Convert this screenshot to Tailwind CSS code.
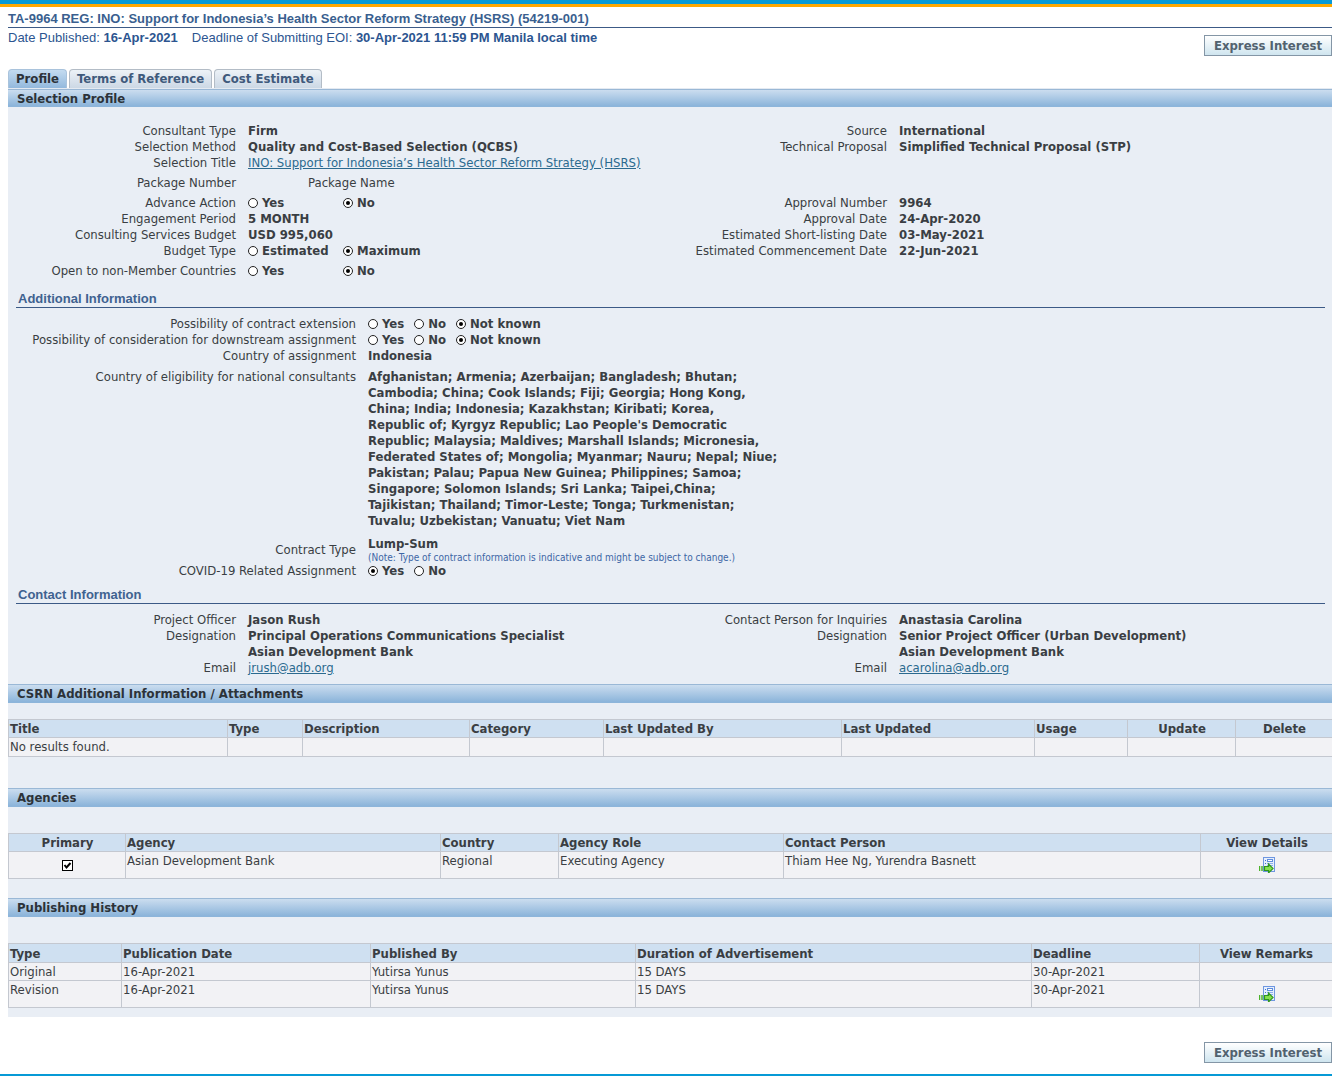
<!DOCTYPE html>
<html lang="en">
<head>
<meta charset="utf-8">
<meta name="viewport" content="width=device-width, initial-scale=1">
<title>TA-9964 REG: Selection Profile</title>
<script src="https://cdn.jsdelivr.net/npm/@tailwindcss/browser@4"></script>
</head>
<body class="bg-white font-['DejaVu_Sans_Condensed','DejaVu_Sans',sans-serif] text-[13px] leading-4 text-[#3a3e43]">

<svg class="hidden" aria-hidden="true">
  <symbol id="details" viewBox="0 0 16 16">
    <rect x="4.5" y=".5" width="11" height="14" fill="#e6effd" stroke="#6f97e0"/>
    <path d="M6 3.5h1M6 6.500h1" stroke="#3f72d0"/>
    <rect x="8.500" y="2.500" width="5" height="2" fill="#fff" stroke="#5f8ddd"/>
    <path d="M8 6.500h6M8 8.500h6" stroke="#8fb0ea"/>
    <path d="M.5 9v5M3 9v5" stroke="#4db32c" stroke-width="1.500"/>
    <path d="M5.500 9.500h4v-2.500l4.500 4.500-4.500 4.500v-2.500h-4z" fill="#86e04e" stroke="#2f961b" stroke-width="1.200"/>
  </symbol>
</svg>

<header>
  <div class="h-[7px] border-b-[3px] border-[#ffa800] bg-[#079ad6]"></div>
  <div class="ml-2 font-['Liberation_Sans',Arial,sans-serif] text-[#3a5f8f]">
    <h1 class="border-b border-[#3c5a86] pt-1 text-[13px] font-bold">TA-9964 REG: INO: Support for Indonesia’s Health Sector Reform Strategy (HSRS) (54219-001)</h1>
  </div>
  <div class="ml-2 flex items-start justify-between">
    <p class="flex gap-[14px] pt-[2px] font-['Liberation_Sans',Arial,sans-serif] text-[13px] text-[#2c5590]">
      <span>Date Published: <b>16-Apr-2021</b></span>
      <span>Deadline of Submitting EOI: <b>30-Apr-2021 11:59 PM Manila local time</b></span>
    </p>
    <button type="button" class="mt-[7px] h-[21px] w-32 border border-[#8496a6] bg-linear-to-b from-white to-[#cfe5ef] text-center font-bold text-[#52626f]">Express Interest</button>
  </div>
</header>

<main class="ml-2">
  <nav class="mt-[13px] flex gap-[2px]">
    <button type="button" class="h-[19px] rounded-t border border-b-0 border-[#a9c3dc] bg-linear-to-b from-[#c3dbf0] to-[#93b9dd] px-[7px] font-bold text-[#2c3238]">Profile</button>
    <button type="button" class="h-[19px] rounded-t border border-b-0 border-[#b3bcc6] bg-linear-to-b from-[#edf2f7] to-[#ccd8e5] px-[7px] font-bold text-[#3f5a7c]">Terms of Reference</button>
    <button type="button" class="h-[19px] rounded-t border border-b-0 border-[#b3bcc6] bg-linear-to-b from-[#edf2f7] to-[#ccd8e5] px-[7px] font-bold text-[#3f5a7c]">Cost Estimate</button>
  </nav>

  <div class="border-t border-[#e4eaf2] bg-[#e9eef5] pb-[9px]">
    <h2 class="h-[18px] border-y border-t-[#9ab8d6] border-b-[#8db5da] bg-linear-to-b from-[#cbddef] to-[#8bb4da] px-[9px] pt-px text-[13px] font-bold text-[#2c3238]">Selection Profile</h2>

    <section class="grid grid-cols-2 pt-4">
      <div>
        <div class="grid grid-cols-[228px_1fr] gap-x-3"><span class="text-right">Consultant Type</span><b>Firm</b></div>
        <div class="grid grid-cols-[228px_1fr] gap-x-3"><span class="text-right">Selection Method</span><b>Quality and Cost-Based Selection (QCBS)</b></div>
        <div class="grid grid-cols-[228px_1fr] gap-x-3"><span class="text-right">Selection Title</span><span><a href="#" class="text-[#2b6a8f] underline">INO: Support for Indonesia’s Health Sector Reform Strategy (HSRS)</a></span></div>
        <div class="mt-1 grid grid-cols-[228px_1fr] gap-x-3"><span class="text-right">Package Number</span><span class="pl-15">Package Name</span></div>
        <div class="mt-1 grid grid-cols-[228px_1fr] gap-x-3" role="radiogroup" aria-labelledby="adv">
          <span id="adv" class="text-right">Advance Action</span>
          <span class="grid grid-cols-[95px_1fr] font-bold">
            <label class="flex items-center gap-1"><input type="radio" name="adv" class="grid size-[10px] appearance-none place-content-center rounded-full border border-[#222] bg-white before:size-1 before:rounded-full checked:before:bg-black">Yes</label>
            <label class="flex items-center gap-1"><input type="radio" name="adv" checked class="grid size-[10px] appearance-none place-content-center rounded-full border border-[#222] bg-white before:size-1 before:rounded-full checked:before:bg-black">No</label>
          </span>
        </div>
        <div class="grid grid-cols-[228px_1fr] gap-x-3"><span class="text-right">Engagement Period</span><b>5 MONTH</b></div>
        <div class="grid grid-cols-[228px_1fr] gap-x-3"><span class="text-right">Consulting Services Budget</span><b>USD 995,060</b></div>
        <div class="grid grid-cols-[228px_1fr] gap-x-3" role="radiogroup" aria-labelledby="bud">
          <span id="bud" class="text-right">Budget Type</span>
          <span class="grid grid-cols-[95px_1fr] font-bold">
            <label class="flex items-center gap-1"><input type="radio" name="bud" class="grid size-[10px] appearance-none place-content-center rounded-full border border-[#222] bg-white before:size-1 before:rounded-full checked:before:bg-black">Estimated</label>
            <label class="flex items-center gap-1"><input type="radio" name="bud" checked class="grid size-[10px] appearance-none place-content-center rounded-full border border-[#222] bg-white before:size-1 before:rounded-full checked:before:bg-black">Maximum</label>
          </span>
        </div>
        <div class="mt-1 grid grid-cols-[228px_1fr] gap-x-3" role="radiogroup" aria-labelledby="open">
          <span id="open" class="text-right">Open to non-Member Countries</span>
          <span class="grid grid-cols-[95px_1fr] font-bold">
            <label class="flex items-center gap-1"><input type="radio" name="open" class="grid size-[10px] appearance-none place-content-center rounded-full border border-[#222] bg-white before:size-1 before:rounded-full checked:before:bg-black">Yes</label>
            <label class="flex items-center gap-1"><input type="radio" name="open" checked class="grid size-[10px] appearance-none place-content-center rounded-full border border-[#222] bg-white before:size-1 before:rounded-full checked:before:bg-black">No</label>
          </span>
        </div>
      </div>
      <div>
        <div class="grid grid-cols-[217px_1fr] gap-x-3"><span class="text-right">Source</span><b>International</b></div>
        <div class="grid grid-cols-[217px_1fr] gap-x-3"><span class="text-right">Technical Proposal</span><b>Simplified Technical Proposal (STP)</b></div>
        <div class="mt-10 grid grid-cols-[217px_1fr] gap-x-3"><span class="text-right">Approval Number</span><b>9964</b></div>
        <div class="grid grid-cols-[217px_1fr] gap-x-3"><span class="text-right">Approval Date</span><b>24-Apr-2020</b></div>
        <div class="grid grid-cols-[217px_1fr] gap-x-3"><span class="text-right">Estimated Short-listing Date</span><b>03-May-2021</b></div>
        <div class="grid grid-cols-[217px_1fr] gap-x-3"><span class="text-right">Estimated Commencement Date</span><b>22-Jun-2021</b></div>
      </div>
    </section>

    <section>
      <h3 class="mt-3 mr-[7px] ml-2 border-b border-[#3c5a86] pl-[2px] font-['Liberation_Sans',Arial,sans-serif] text-[13px] font-bold text-[#3f6290]">Additional Information</h3>
      <div class="mt-2 grid grid-cols-[348px_1fr] gap-x-3" role="radiogroup" aria-labelledby="ext">
        <span id="ext" class="text-right">Possibility of contract extension</span>
        <span class="flex gap-[10px] font-bold">
          <label class="flex items-center gap-1"><input type="radio" name="ext" class="grid size-[10px] appearance-none place-content-center rounded-full border border-[#222] bg-white before:size-1 before:rounded-full checked:before:bg-black">Yes</label>
          <label class="flex items-center gap-1"><input type="radio" name="ext" class="grid size-[10px] appearance-none place-content-center rounded-full border border-[#222] bg-white before:size-1 before:rounded-full checked:before:bg-black">No</label>
          <label class="flex items-center gap-1"><input type="radio" name="ext" checked class="grid size-[10px] appearance-none place-content-center rounded-full border border-[#222] bg-white before:size-1 before:rounded-full checked:before:bg-black">Not known</label>
        </span>
      </div>
      <div class="grid grid-cols-[348px_1fr] gap-x-3" role="radiogroup" aria-labelledby="down">
        <span id="down" class="text-right">Possibility of consideration for downstream assignment</span>
        <span class="flex gap-[10px] font-bold">
          <label class="flex items-center gap-1"><input type="radio" name="down" class="grid size-[10px] appearance-none place-content-center rounded-full border border-[#222] bg-white before:size-1 before:rounded-full checked:before:bg-black">Yes</label>
          <label class="flex items-center gap-1"><input type="radio" name="down" class="grid size-[10px] appearance-none place-content-center rounded-full border border-[#222] bg-white before:size-1 before:rounded-full checked:before:bg-black">No</label>
          <label class="flex items-center gap-1"><input type="radio" name="down" checked class="grid size-[10px] appearance-none place-content-center rounded-full border border-[#222] bg-white before:size-1 before:rounded-full checked:before:bg-black">Not known</label>
        </span>
      </div>
      <div class="grid grid-cols-[348px_1fr] gap-x-3"><span class="text-right">Country of assignment</span><b>Indonesia</b></div>
      <div class="mt-[5px] grid grid-cols-[348px_1fr] gap-x-3">
        <span class="text-right">Country of eligibility for national consultants</span>
        <b>Afghanistan; Armenia; Azerbaijan; Bangladesh; Bhutan;<br>
          Cambodia; China; Cook Islands; Fiji; Georgia; Hong Kong,<br>
          China; India; Indonesia; Kazakhstan; Kiribati; Korea,<br>
          Republic of; Kyrgyz Republic; Lao People's Democratic<br>
          Republic; Malaysia; Maldives; Marshall Islands; Micronesia,<br>
          Federated States of; Mongolia; Myanmar; Nauru; Nepal; Niue;<br>
          Pakistan; Palau; Papua New Guinea; Philippines; Samoa;<br>
          Singapore; Solomon Islands; Sri Lanka; Taipei,China;<br>
          Tajikistan; Thailand; Timor-Leste; Tonga; Turkmenistan;<br>
          Tuvalu; Uzbekistan; Vanuatu; Viet Nam</b>
      </div>
      <div class="mt-[7px] grid grid-cols-[348px_1fr] items-center gap-x-3">
        <span class="text-right">Contract Type</span>
        <div>
          <b class="block">Lump-Sum</b>
          <p class="text-[10px] leading-[11px] text-[#3d66a5]">(Note: Type of contract information is indicative and might be subject to change.)</p>
        </div>
      </div>
      <div class="grid grid-cols-[348px_1fr] gap-x-3" role="radiogroup" aria-labelledby="cov">
        <span id="cov" class="text-right">COVID-19 Related Assignment</span>
        <span class="flex gap-[10px] font-bold">
          <label class="flex items-center gap-1"><input type="radio" name="cov" checked class="grid size-[10px] appearance-none place-content-center rounded-full border border-[#222] bg-white before:size-1 before:rounded-full checked:before:bg-black">Yes</label>
          <label class="flex items-center gap-1"><input type="radio" name="cov" class="grid size-[10px] appearance-none place-content-center rounded-full border border-[#222] bg-white before:size-1 before:rounded-full checked:before:bg-black">No</label>
        </span>
      </div>
    </section>

    <section>
      <h3 class="mt-2 mr-[7px] ml-2 border-b border-[#3c5a86] pl-[2px] font-['Liberation_Sans',Arial,sans-serif] text-[13px] font-bold text-[#3f6290]">Contact Information</h3>
      <div class="mt-2 grid grid-cols-2">
        <div>
          <div class="grid grid-cols-[228px_1fr] gap-x-3"><span class="text-right">Project Officer</span><b>Jason Rush</b></div>
          <div class="grid grid-cols-[228px_1fr] gap-x-3"><span class="text-right">Designation</span><b>Principal Operations Communications Specialist<br>Asian Development Bank</b></div>
          <div class="grid grid-cols-[228px_1fr] gap-x-3"><span class="text-right">Email</span><span><a href="mailto:jrush@adb.org" class="text-[#2b6a8f] underline">jrush@adb.org</a></span></div>
        </div>
        <div>
          <div class="grid grid-cols-[217px_1fr] gap-x-3"><span class="text-right">Contact Person for Inquiries</span><b>Anastasia Carolina</b></div>
          <div class="grid grid-cols-[217px_1fr] gap-x-3"><span class="text-right">Designation</span><b>Senior Project Officer (Urban Development)<br>Asian Development Bank</b></div>
          <div class="grid grid-cols-[217px_1fr] gap-x-3"><span class="text-right">Email</span><span><a href="mailto:acarolina@adb.org" class="text-[#2b6a8f] underline">acarolina@adb.org</a></span></div>
        </div>
      </div>
    </section>

    <h2 class="mt-2 h-[19px] border-y border-t-[#9ab8d6] border-b-[#8db5da] bg-linear-to-b from-[#cbddef] to-[#8bb4da] px-[9px] pt-px text-[13px] font-bold text-[#2c3238]">CSRN Additional Information / Attachments</h2>
    <table class="mt-4 w-full table-fixed border-separate border-spacing-0 text-left">
      <thead>
        <tr class="h-[18px] bg-[#cfe0f1] [&>th]:border-t [&>th]:border-l [&>th]:border-[#c4c8d0] [&>th]:p-0 [&>th]:pl-px [&>th]:pt-px">
          <th class="w-[219px]">Title</th><th class="w-[75px]">Type</th><th class="w-[167px]">Description</th><th class="w-[134px]">Category</th><th>Last Updated By</th><th class="w-[193px]">Last Updated</th><th class="w-[93px]">Usage</th><th class="w-[108px] text-center">Update</th><th class="w-[97px] text-center">Delete</th>
        </tr>
      </thead>
      <tbody>
        <tr class="h-5 bg-[#f2f2f5] align-top [&>td]:border-y [&>td]:border-l [&>td]:border-[#c4c8d0] [&>td]:p-0 [&>td]:pl-px [&>td]:pt-px">
          <td>No results found.</td><td></td><td></td><td></td><td></td><td></td><td></td><td></td><td></td>
        </tr>
      </tbody>
    </table>

    <h2 class="mt-[31px] h-[19px] border-y border-t-[#9ab8d6] border-b-[#8db5da] bg-linear-to-b from-[#cbddef] to-[#8bb4da] px-[9px] pt-px text-[13px] font-bold text-[#2c3238]">Agencies</h2>
    <table class="mt-[26px] w-full table-fixed border-separate border-spacing-0 text-left">
      <thead>
        <tr class="h-[18px] bg-[#cfe0f1] [&>th]:border-t [&>th]:border-l [&>th]:border-[#c4c8d0] [&>th]:p-0 [&>th]:pl-px [&>th]:pt-px">
          <th class="w-[117px] text-center">Primary</th><th class="w-[315px]">Agency</th><th class="w-[118px]">Country</th><th class="w-[225px]">Agency Role</th><th>Contact Person</th><th class="w-[132px] text-center">View Details</th>
        </tr>
      </thead>
      <tbody>
        <tr class="h-7 bg-[#f2f2f5] align-top [&>td]:border-y [&>td]:border-l [&>td]:border-[#c4c8d0] [&>td]:p-0 [&>td]:pl-px [&>td]:pt-px">
          <td><label class="mx-auto mt-[7px] grid size-[11px] *:col-start-1 *:row-start-1"><input type="checkbox" checked aria-label="Primary" class="peer size-[11px] appearance-none border border-black bg-white"><svg viewBox="0 0 11 11" class="invisible size-[11px] peer-checked:visible" aria-hidden="true"><path d="M2.500 5l2 2.500 4-4.500" fill="none" stroke="#000" stroke-width="2"/></svg></label></td>
          <td>Asian Development Bank</td><td>Regional</td><td>Executing Agency</td><td>Thiam Hee Ng, Yurendra Basnett</td>
          <td><button type="button" aria-label="View details" class="mx-auto mt-1 block size-4"><svg class="size-4"><use href="#details"/></svg></button></td>
        </tr>
      </tbody>
    </table>

    <h2 class="mt-[19px] h-[19px] border-y border-t-[#9ab8d6] border-b-[#8db5da] bg-linear-to-b from-[#cbddef] to-[#8bb4da] px-[9px] pt-px text-[13px] font-bold text-[#2c3238]">Publishing History</h2>
    <table class="mt-[26px] w-full table-fixed border-separate border-spacing-0 text-left">
      <thead>
        <tr class="h-[19px] bg-[#cfe0f1] [&>th]:border-t [&>th]:border-l [&>th]:border-[#c4c8d0] [&>th]:p-0 [&>th]:pl-px [&>th]:pt-px">
          <th class="w-[113px]">Type</th><th class="w-[249px]">Publication Date</th><th class="w-[265px]">Published By</th><th>Duration of Advertisement</th><th class="w-[168px]">Deadline</th><th class="w-[133px] text-center">View Remarks</th>
        </tr>
      </thead>
      <tbody>
        <tr class="h-[18px] bg-[#f2f2f5] align-top [&>td]:border-t [&>td]:border-l [&>td]:border-[#c4c8d0] [&>td]:p-0 [&>td]:pl-px [&>td]:pt-px">
          <td>Original</td><td>16-Apr-2021</td><td>Yutirsa Yunus</td><td>15 DAYS</td><td>30-Apr-2021</td><td></td>
        </tr>
        <tr class="h-7 bg-[#f2f2f5] align-top [&>td]:border-y [&>td]:border-l [&>td]:border-[#c4c8d0] [&>td]:p-0 [&>td]:pl-px [&>td]:pt-px">
          <td>Revision</td><td>16-Apr-2021</td><td>Yutirsa Yunus</td><td>15 DAYS</td><td>30-Apr-2021</td>
          <td><button type="button" aria-label="View remarks" class="mx-auto mt-1 block size-4"><svg class="size-4"><use href="#details"/></svg></button></td>
        </tr>
      </tbody>
    </table>
  </div>
</main>

<footer class="border-b-2 border-[#079ad6] pt-[25px] pb-[11px]">
  <button type="button" class="ml-auto block h-[21px] w-32 border border-[#8496a6] bg-linear-to-b from-white to-[#cfe5ef] text-center font-bold text-[#52626f]">Express Interest</button>
</footer>
</body>
</html>
